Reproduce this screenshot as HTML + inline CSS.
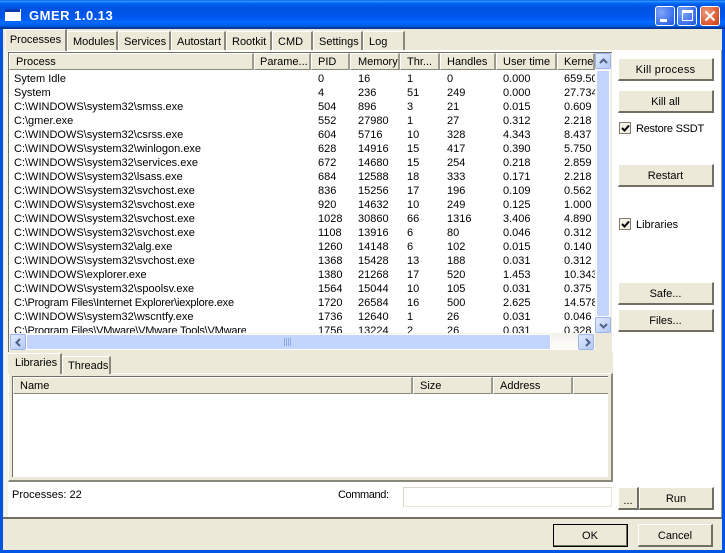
<!DOCTYPE html>
<html><head><meta charset="utf-8"><style>
html,body{margin:0;padding:0;width:725px;height:553px;overflow:hidden;background:#0054e3}
*{box-sizing:border-box}
body{position:relative;font:11px/14px "Liberation Sans",sans-serif;color:#000}
.a{position:absolute}
#title{left:0;top:0;width:725px;height:29px;background:linear-gradient(#0058ee 0,#3593ff 4%,#288eff 6%,#127dff 8%,#036ffc 10%,#0262ee 14%,#0057e5 20%,#0054e3 24%,#0055eb 56%,#005bf5 66%,#026afe 76%,#0062ef 86%,#0052d6 92%,#0040ab 94%,#003092 100%)}
#ttl{left:29px;top:8px;font:bold 13px/16px "Liberation Sans",sans-serif;color:#fff;letter-spacing:.5px;white-space:nowrap}
#client{left:3px;top:29px;width:719px;height:521px;background:#ece9d8}
.tb{top:6px;width:20px;height:20px;border:1px solid #fff;border-radius:3px;background:radial-gradient(circle at 30% 30%,#7ea6f8,#3a6cea 70%,#2a55d0)}
.page{background:#fff}
.btn{background:#ece9d8;border-top:1px solid #fff;border-left:1px solid #fff;border-right:2px solid #716f64;border-bottom:2px solid #716f64;text-align:center;white-space:nowrap;padding-top:1px}
.tab{background:#ece9d8;border-top:1px solid #fff;border-left:1px solid #fff;border-right:2px solid #8a887a;padding-left:5px;padding-top:1px;white-space:nowrap}
.hd{top:53px;height:17px;background:#ece9d8;border-top:1px solid #fff;border-left:1px solid #fff;border-right:2px solid #9d9b8c;border-bottom:1px solid #8a887a;padding-left:6px;line-height:16px;white-space:nowrap;overflow:hidden}
.r{position:absolute;left:0;width:587px;height:14px;white-space:nowrap}
.r span{position:absolute;top:0;overflow:hidden}
.r span:nth-child(1){left:5px;width:232px}
.r span:nth-child(2){left:309px}
.r span:nth-child(3){left:349px}
.r span:nth-child(4){left:398px}
.r span:nth-child(5){left:438px}
.r span:nth-child(6){left:494px}
.r span:nth-child(7){left:555px;width:32px}
.n{letter-spacing:-.2px}
.sb{background:#c3d5fd;border:1px solid #fff;border-radius:2px}
.arr{background:linear-gradient(135deg,#e1eafe,#b4c8f6);border:1px solid #fff;border-radius:2px;outline:1px solid #9db4ea;outline-offset:-1px}
.chk{width:12px;height:12px;background:#f4f2e8;border:1px solid #7f7d70}
</style></head><body>
<div class="a" id="title"></div>
<svg class="a" style="left:5px;top:9px" width="16" height="12"><rect width="16" height="12" fill="#fff"/><rect width="15" height="3" fill="#0a3cb0"/></svg>
<div class="a" id="ttl">GMER 1.0.13</div>
<div class="a tb" style="left:655px"><div class="a" style="left:4px;top:12px;width:7px;height:3px;background:#fff"></div></div>
<div class="a tb" style="left:677px"><div class="a" style="left:4px;top:3px;width:11px;height:11px;border:1px solid #fff;border-top-width:3px"></div></div>
<div class="a tb" style="left:700px;background:radial-gradient(circle at 30% 30%,#eb9a7c,#dd5a30 65%,#c23a14)"><svg class="a" style="left:3px;top:3px" width="12" height="12"><path d="M1.500 1.500L10.500 10.500M10.500 1.500L1.500 10.500" stroke="#fff" stroke-width="2"/></svg></div>
<div class="a" id="client"></div>

<!-- top tabs -->
<div class="a page" style="left:4px;top:50px;width:717px;height:467px;border-top:1px solid #fff"></div>
<div class="a" style="left:4px;top:50px;width:4px;height:467px;background:#f5f3ea"></div>
<div class="a" style="left:5px;top:29px;width:62px;height:22px;background:#ece9d8;border-top:1px solid #fff;border-left:1px solid #fff;border-right:2px solid #8a887a;text-align:center;line-height:20px">Processes</div>
<div class="a tab" style="left:67px;top:31px;width:51px;height:19px;line-height:19px">Modules</div>
<div class="a tab" style="left:118px;top:31px;width:53px;height:19px;line-height:19px">Services</div>
<div class="a tab" style="left:171px;top:31px;width:55px;height:19px;line-height:19px">Autostart</div>
<div class="a tab" style="left:226px;top:31px;width:46px;height:19px;line-height:19px">Rootkit</div>
<div class="a tab" style="left:272px;top:31px;width:41px;height:19px;line-height:19px">CMD</div>
<div class="a tab" style="left:313px;top:31px;width:50px;height:19px;line-height:19px">Settings</div>
<div class="a tab" style="left:363px;top:31px;width:42px;height:19px;line-height:19px">Log</div>
<div class="a" style="left:721px;top:50px;width:1px;height:467px;background:#9d9b8c"></div>

<!-- process list -->
<div class="a" style="left:8px;top:52px;width:604px;height:300px;background:#ece9d8;border-top:1px solid #716f64;border-left:1px solid #716f64"></div>
<div class="a hd" style="left:9px;width:245px">Process</div>
<div class="a hd" style="left:254px;width:57px;padding-left:5px">Parame...</div>
<div class="a hd" style="left:311px;width:39px">PID</div>
<div class="a hd" style="left:350px;width:50px;padding-left:7px">Memory</div>
<div class="a hd" style="left:400px;width:40px">Thr...</div>
<div class="a hd" style="left:440px;width:56px">Handles</div>
<div class="a hd" style="left:496px;width:61px">User time</div>
<div class="a hd" style="left:557px;width:38px">Kernel</div>
<div class="a" style="left:9px;top:70px;width:586px;height:263px;background:#fff;overflow:hidden">
<div class="r" style="top:2px"><span>Sytem Idle</span><span>0</span><span>16</span><span>1</span><span>0</span><span>0.000</span><span>659.50</span></div>
<div class="r" style="top:16px"><span>System</span><span>4</span><span>236</span><span>51</span><span>249</span><span>0.000</span><span>27.734</span></div>
<div class="r" style="top:30px"><span>C:\WINDOWS\system32\smss.exe</span><span>504</span><span>896</span><span>3</span><span>21</span><span>0.015</span><span>0.609</span></div>
<div class="r" style="top:44px"><span>C:\gmer.exe</span><span>552</span><span>27980</span><span>1</span><span>27</span><span>0.312</span><span>2.218</span></div>
<div class="r" style="top:58px"><span>C:\WINDOWS\system32\csrss.exe</span><span>604</span><span>5716</span><span>10</span><span>328</span><span>4.343</span><span>8.437</span></div>
<div class="r" style="top:72px"><span>C:\WINDOWS\system32\winlogon.exe</span><span>628</span><span>14916</span><span>15</span><span>417</span><span>0.390</span><span>5.750</span></div>
<div class="r" style="top:86px"><span>C:\WINDOWS\system32\services.exe</span><span>672</span><span>14680</span><span>15</span><span>254</span><span>0.218</span><span>2.859</span></div>
<div class="r" style="top:100px"><span>C:\WINDOWS\system32\lsass.exe</span><span>684</span><span>12588</span><span>18</span><span>333</span><span>0.171</span><span>2.218</span></div>
<div class="r" style="top:114px"><span>C:\WINDOWS\system32\svchost.exe</span><span>836</span><span>15256</span><span>17</span><span>196</span><span>0.109</span><span>0.562</span></div>
<div class="r" style="top:128px"><span>C:\WINDOWS\system32\svchost.exe</span><span>920</span><span>14632</span><span>10</span><span>249</span><span>0.125</span><span>1.000</span></div>
<div class="r" style="top:142px"><span>C:\WINDOWS\system32\svchost.exe</span><span>1028</span><span>30860</span><span>66</span><span>1316</span><span>3.406</span><span>4.890</span></div>
<div class="r" style="top:156px"><span>C:\WINDOWS\system32\svchost.exe</span><span>1108</span><span>13916</span><span>6</span><span>80</span><span>0.046</span><span>0.312</span></div>
<div class="r" style="top:170px"><span>C:\WINDOWS\system32\alg.exe</span><span>1260</span><span>14148</span><span>6</span><span>102</span><span>0.015</span><span>0.140</span></div>
<div class="r" style="top:184px"><span>C:\WINDOWS\system32\svchost.exe</span><span>1368</span><span>15428</span><span>13</span><span>188</span><span>0.031</span><span>0.312</span></div>
<div class="r" style="top:198px"><span>C:\WINDOWS\explorer.exe</span><span>1380</span><span>21268</span><span>17</span><span>520</span><span>1.453</span><span>10.343</span></div>
<div class="r" style="top:212px"><span>C:\WINDOWS\system32\spoolsv.exe</span><span>1564</span><span>15044</span><span>10</span><span>105</span><span>0.031</span><span>0.375</span></div>
<div class="r" style="top:226px"><span class="n">C:\Program Files\Internet Explorer\iexplore.exe</span><span>1720</span><span>26584</span><span>16</span><span>500</span><span>2.625</span><span>14.578</span></div>
<div class="r" style="top:240px"><span>C:\WINDOWS\system32\wscntfy.exe</span><span>1736</span><span>12640</span><span>1</span><span>26</span><span>0.031</span><span>0.046</span></div>
<div class="r" style="top:254px"><span class="n">C:\Program Files\VMware\VMware Tools\VMwareUser.exe</span><span>1756</span><span>13224</span><span>2</span><span>26</span><span>0.031</span><span>0.328</span></div>
</div>
<!-- v scrollbar -->
<div class="a" style="left:595px;top:53px;width:16px;height:280px;background:#f3f2ff"></div>
<div class="a sb" style="left:596px;top:70px;width:14px;height:247px"></div>
<div class="a arr" style="left:595px;top:53px;width:16px;height:16px"><svg class="a" style="left:3px;top:4px" width="9" height="7"><path d="M1 5L4.500 1.500L8 5" fill="none" stroke="#4d6185" stroke-width="2"/></svg></div>
<div class="a arr" style="left:595px;top:317px;width:16px;height:16px"><svg class="a" style="left:3px;top:4px" width="9" height="7"><path d="M1 2L4.500 5.500L8 2" fill="none" stroke="#4d6185" stroke-width="2"/></svg></div>
<!-- h scrollbar -->
<div class="a" style="left:9px;top:333px;width:586px;height:17px;background:linear-gradient(#f3f1ec,#fefefb)"></div>
<div class="a sb" style="left:26px;top:334px;width:525px;height:16px"></div>
<svg class="a" style="left:283px;top:338px" width="10" height="8"><path d="M1.500 0V8M3.500 0V8M5.500 0V8M7.500 0V8" stroke="#8faaeb" stroke-width="1"/></svg>
<div class="a arr" style="left:10px;top:334px;width:16px;height:16px"><svg class="a" style="left:4px;top:3px" width="7" height="9"><path d="M5 1L1.500 4.500L5 8" fill="none" stroke="#4d6185" stroke-width="2"/></svg></div>
<div class="a arr" style="left:578px;top:334px;width:16px;height:16px"><svg class="a" style="left:5px;top:3px" width="7" height="9"><path d="M2 1L5.500 4.500L2 8" fill="none" stroke="#4d6185" stroke-width="2"/></svg></div>

<!-- lower panel -->
<div class="a" style="left:8px;top:352px;width:605px;height:130px;background:#ece9d8"></div>
<div class="a" style="left:8px;top:373px;width:605px;height:109px;background:#ece9d8;border-top:1px solid #fff;border-left:1px solid #fff;border-right:2px solid #8a887a;border-bottom:2px solid #8a887a"></div>
<div class="a" style="left:8px;top:353px;width:54px;height:21px;background:#ece9d8;border-top:1px solid #fff;border-right:2px solid #8a887a;padding-left:7px;line-height:19px">Libraries</div>
<div class="a tab" style="left:62px;top:356px;width:49px;height:18px;line-height:17px">Threads</div>
<div class="a" style="left:12px;top:376px;width:596px;height:101px;background:#fff;border-top:1px solid #716f64;border-left:1px solid #716f64"></div>
<div class="a hd" style="left:13px;top:377px;width:400px">Name</div>
<div class="a hd" style="left:413px;top:377px;width:80px">Size</div>
<div class="a hd" style="left:493px;top:377px;width:80px">Address</div>
<div class="a hd" style="left:573px;top:377px;width:35px;border-right:0"></div>

<!-- right panel -->
<div class="a btn" style="left:618px;top:58px;width:96px;height:23px;line-height:21px;letter-spacing:.3px">Kill process</div>
<div class="a btn" style="left:618px;top:90px;width:96px;height:23px;line-height:21px">Kill all</div>
<div class="a chk" style="left:619px;top:122px"><svg class="a" style="left:1px;top:1px" width="9" height="9"><path d="M1 4L3.500 6.500L8 1.500" fill="none" stroke="#000" stroke-width="2"/></svg></div>
<div class="a" style="left:636px;top:122px;letter-spacing:-.25px">Restore SSDT</div>
<div class="a btn" style="left:618px;top:164px;width:96px;height:23px;line-height:21px">Restart</div>
<div class="a chk" style="left:619px;top:218px"><svg class="a" style="left:1px;top:1px" width="9" height="9"><path d="M1 4L3.500 6.500L8 1.500" fill="none" stroke="#000" stroke-width="2"/></svg></div>
<div class="a" style="left:636px;top:218px">Libraries</div>
<div class="a btn" style="left:618px;top:282px;width:96px;height:23px;line-height:21px">Safe...</div>
<div class="a btn" style="left:618px;top:309px;width:96px;height:23px;line-height:21px">Files...</div>

<!-- bottom of page -->
<div class="a" style="left:12px;top:488px">Processes: 22</div>
<div class="a" style="left:338px;top:488px;letter-spacing:-.4px">Command:</div>
<div class="a" style="left:403px;top:487px;width:209px;height:20px;background:#fff;border:1px solid #ece9d8;border-top-color:#d8d6c6;border-left-color:#d8d6c6"></div>
<div class="a btn" style="left:618px;top:487px;width:21px;height:23px;line-height:24px">...</div>
<div class="a btn" style="left:639px;top:487px;width:75px;height:23px;line-height:21px">Run</div>
<div class="a" style="left:3px;top:517px;width:719px;height:2px;background:#716f64"></div>
<div class="a btn" style="left:553px;top:524px;width:75px;height:23px;line-height:21px;outline:1px solid #000;outline-offset:-1px">OK</div>
<div class="a btn" style="left:638px;top:524px;width:75px;height:23px;line-height:21px">Cancel</div>
</body></html>
